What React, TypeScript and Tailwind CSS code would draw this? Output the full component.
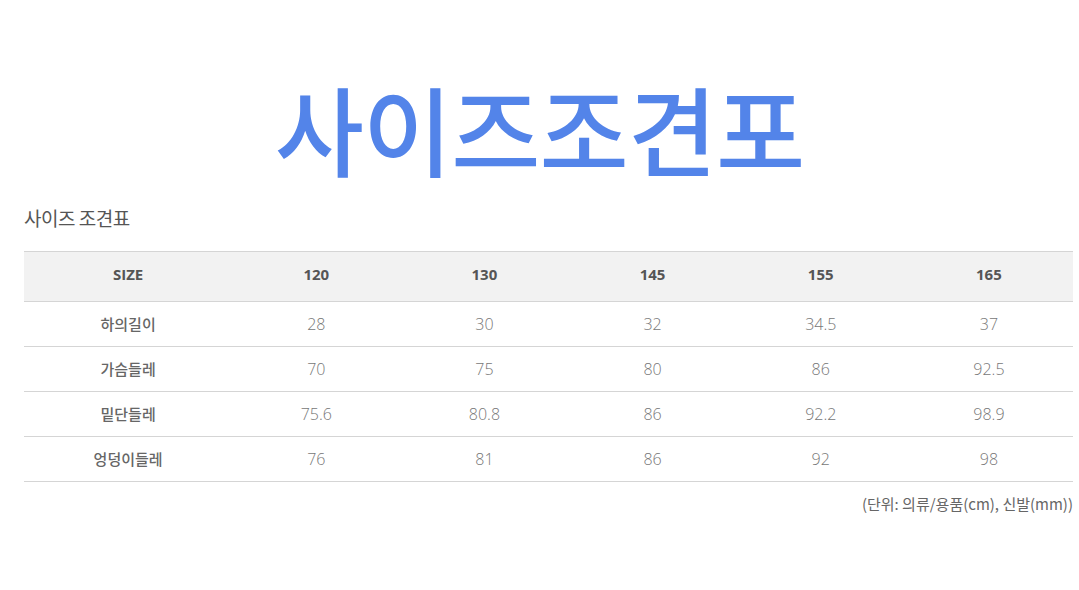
const columns = ["120", "130", "145", "155", "165"];

const rows = [
  { label: "하의길이", values: ["28", "30", "32", "34.5", "37"] },
  { label: "가슴들레", values: ["70", "75", "80", "86", "92.5"] },
  { label: "밑단들레", values: ["75.6", "80.8", "86", "92.2", "98.9"] },
  { label: "엉덩이들레", values: ["76", "81", "86", "92", "98"] },
];

const App = () => {
  return (
    <div className="w-[1079px] h-[590px] bg-white overflow-hidden font-['Open_Sans','Noto_Sans_CJK_KR',sans-serif]">
      <div className="h-[196px] flex items-center justify-center pt-[56px]">
        <div className="text-[97px] leading-none font-medium text-[#5384e9] tracking-[-1px] font-['Noto_Sans_CJK_KR',sans-serif]">
          사이즈조견포
        </div>
      </div>
      <div className="px-[24px] pr-[6px]">
        <div className="text-[19px] text-[#555] font-normal font-['Noto_Sans_CJK_KR',sans-serif] h-[55px] pt-[8px] tracking-[-0.5px]">
          사이즈 조견표
        </div>
        <table className="w-full border-collapse text-center text-[15px]">
          <thead>
            <tr className="bg-[#f2f2f2] border-t border-b border-[#d5d5d5] h-[50px]">
              <th className="w-[208px] font-bold text-[#555] pb-[4px]">SIZE</th>
              {columns.map((c) => (
                <th key={c} className="w-[168px] font-bold text-[#555] pb-[4px]">
                  {c}
                </th>
              ))}
            </tr>
          </thead>
          <tbody>
            {rows.map((row) => (
              <tr key={row.label} className="border-b border-[#d5d5d5] h-[45px]">
                <td className="text-[#666] font-medium text-[15px] font-['Noto_Sans_CJK_KR',sans-serif]">
                  {row.label}
                </td>
                {row.values.map((v, i) => (
                  <td key={i} className="text-[#777] font-light text-[16px]">
                    {v}
                  </td>
                ))}
              </tr>
            ))}
          </tbody>
        </table>
        <div className="flex justify-end pt-[11px] text-[15px] text-[#666] font-['Noto_Sans_CJK_KR',sans-serif]">
          (단위: 의류/용품(cm), 신발(mm))
        </div>
      </div>
    </div>
  );
};

export default App;
